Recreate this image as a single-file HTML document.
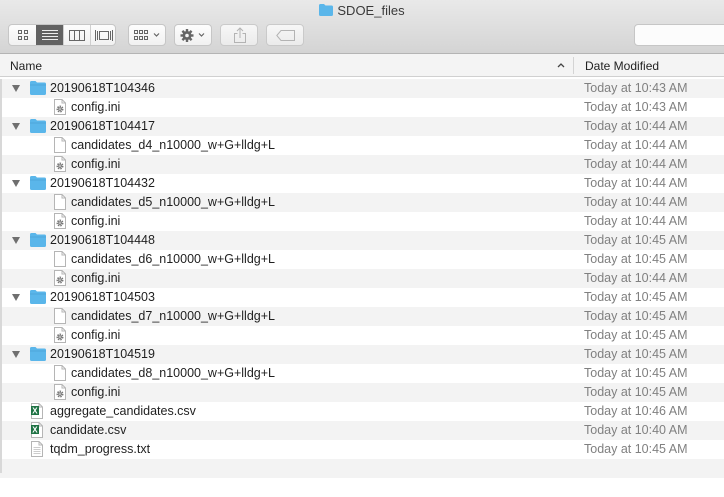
<!DOCTYPE html>
<html><head><meta charset="utf-8"><style>
*{margin:0;padding:0;box-sizing:border-box}
body{width:724px;height:473px;overflow:hidden;background:#fff;font-family:"Liberation Sans",sans-serif;position:relative}
.tb{position:absolute;left:0;top:0;width:724px;height:54px;background:linear-gradient(#e9e9e9,#d4d4d4);border-bottom:1px solid #b4b4b4}
.title{position:absolute;top:3px;left:0;width:724px;text-align:center;font-size:13px;color:#3a3a3a}
.btn{position:absolute;top:24px;height:22px;background:linear-gradient(#fdfdfd,#f1f1f1);border:1px solid #c6c6c6;border-radius:4px}
.hdr{position:absolute;top:54px;left:0;width:724px;height:23px;background:#f4f4f4;border-bottom:1px solid #d0d0d0;font-size:12px;color:#222}
.row{position:absolute;left:0;width:724px;height:19px;font-size:12.5px;color:#1f1f1f}
.g{background:#f3f3f3}
.row .n{position:absolute;top:2px;white-space:nowrap}
.row .d{position:absolute;left:584px;top:2px;color:#808080}
.tri{position:absolute;left:12px;top:6px;width:0;height:0;border-left:4.5px solid transparent;border-right:4.5px solid transparent;border-top:7px solid #6f6f6f}
.fold{position:absolute;left:30px;top:2px}
.fi{position:absolute;top:1px}
</style></head><body>
<div class="tb">
<div class="title"><svg width="14" height="12" style="vertical-align:-1px;margin-right:4px"><path d="M0 1.5Q0 0 1.5 0H5L6.5 1.5H12.5Q14 1.5 14 3V10.5Q14 12 12.5 12H1.5Q0 12 0 10.5Z" fill="#5ab6ea"/></svg>SDOE_files</div>
<div class="btn" style="left:8px;width:108px;overflow:hidden">
<div style="position:absolute;left:27px;top:-1px;width:27px;height:22px;background:#626262"></div>
<div style="position:absolute;left:54px;top:0;width:1px;height:20px;background:#cfcfcf"></div>
<div style="position:absolute;left:81px;top:0;width:1px;height:20px;background:#cfcfcf"></div>
<svg style="position:absolute;left:9px;top:5px" width="10" height="10"><g fill="none" stroke="#666" stroke-width="1"><rect x=".5" y=".5" width="3" height="3"/><rect x="6.5" y=".5" width="3" height="3"/><rect x=".5" y="6.5" width="3" height="3"/><rect x="6.5" y="6.5" width="3" height="3"/></g></svg>
<svg style="position:absolute;left:33px;top:5px" width="16" height="11"><g stroke="#eee" stroke-width="1"><line x1="0" y1=".5" x2="16" y2=".5"/><line x1="0" y1="3.5" x2="16" y2="3.5"/><line x1="0" y1="6.5" x2="16" y2="6.5"/><line x1="0" y1="9.5" x2="16" y2="9.5"/></g></svg>
<svg style="position:absolute;left:60px;top:5px" width="16" height="11"><g fill="none" stroke="#666"><rect x=".5" y=".5" width="15" height="10"/><line x1="5.5" y1="0" x2="5.5" y2="11"/><line x1="10.5" y1="0" x2="10.5" y2="11"/></g></svg>
<svg style="position:absolute;left:86px;top:5px" width="18" height="11"><g fill="none" stroke="#666"><rect x="4.5" y="1.5" width="9" height="8"/><line x1=".5" y1="0" x2=".5" y2="11"/><line x1="2.5" y1="1" x2="2.5" y2="10"/><line x1="15.5" y1="1" x2="15.5" y2="10"/><line x1="17.5" y1="0" x2="17.5" y2="11"/></g></svg>
</div>
<div class="btn" style="left:128px;width:38px"><svg style="position:absolute;left:5px;top:5px" width="30" height="11"><g fill="none" stroke="#666"><rect x=".5" y=".5" width="3" height="3"/><rect x="5.5" y=".5" width="3" height="3"/><rect x="10.5" y=".5" width="3" height="3"/><rect x=".5" y="6.5" width="3" height="3"/><rect x="5.5" y="6.5" width="3" height="3"/><rect x="10.5" y="6.5" width="3" height="3"/><path d="M20 3.5l2.5 2.5 2.5-2.5" stroke-width="1.2"/></g></svg></div>
<div class="btn" style="left:174px;width:38px"><svg style="position:absolute;left:5px;top:3px" width="30" height="15"><g fill="#666"><circle cx="7" cy="7.5" r="4.5"/><g stroke="#666" stroke-width="2.4"><line x1="7" y1="1" x2="7" y2="14"/><line x1=".5" y1="7.5" x2="13.5" y2="7.5"/><line x1="2.4" y1="2.9" x2="11.6" y2="12.1"/><line x1="11.6" y1="2.9" x2="2.4" y2="12.1"/></g><circle cx="7" cy="7.5" r="1.8" fill="#f6f6f6"/></g><path d="M19 5.5l2.5 2.5 2.5-2.5" fill="none" stroke="#666" stroke-width="1.2"/></svg></div>
<div class="btn" style="left:220px;width:38px;opacity:.8"><svg style="position:absolute;left:12px;top:2px" width="14" height="17"><g fill="none" stroke="#aaa"><path d="M4.5 6.5H1.5V15.5H12.5V6.5H9.5"/><path d="M7 11V1M4 4l3-3 3 3"/></g></svg></div>
<div class="btn" style="left:266px;width:38px;opacity:.8"><svg style="position:absolute;left:9px;top:5px" width="20" height="11"><path d="M5 .5H18.5V10.5H5L.8 5.5Z" fill="none" stroke="#aaa"/></svg></div>
<div class="btn" style="left:634px;width:100px;background:#fcfcfc"></div>
</div>
<div class="hdr"><span style="position:absolute;left:10px;top:5px">Name</span><svg style="position:absolute;left:557px;top:8px" width="8" height="6"><path d="M1 5l3-3 3 3" fill="none" stroke="#444" stroke-width="1.3"/></svg><div style="position:absolute;left:573px;top:3px;width:1px;height:17px;background:#d4d4d4"></div><span style="position:absolute;left:585px;top:5px">Date Modified</span></div>
<div id="rows"></div>
<div style="position:absolute;left:0;top:79px;width:2px;height:394px;background:#d8d8d8"></div>
<script>
const F='<svg class="fold" width="16" height="14"><path d="M0 1.5Q0 0 1.5 0H5.5L7 1.5H14.5Q16 1.5 16 3V12.5Q16 14 14.5 14H1.5Q0 14 0 12.5Z" fill="#5ab6ea"/><path d="M0 4H16" stroke="#4aa3d8" stroke-width=".8"/></svg>';
function doc(x,t){let s='<svg class="fi" style="left:'+x+'px" width="12" height="16"><path d="M.5 .5H8L11.5 4V15.5H.5Z" fill="#fff" stroke="#b5b5b5"/><path d="M8 .5V4H11.5" fill="none" stroke="#b5b5b5"/>';
if(t=='g')s+='<circle cx="6" cy="10" r="2.6" fill="none" stroke="#777" stroke-width="1.8" stroke-dasharray="1.4 .9"/><circle cx="6" cy="10" r="1.8" fill="#777"/><circle cx="6" cy="10" r=".8" fill="#fff"/>';
if(t=='x')s+='<rect x="0" y="3" width="8" height="9" fill="#1f7244"/><text x="1.3" y="10.5" font-size="8" font-weight="bold" fill="#fff" font-family="Liberation Sans">X</text>';
if(t=='t')s+='<g stroke="#ccc"><line x1="2.5" y1="6.5" x2="9.5" y2="6.5"/><line x1="2.5" y1="8.5" x2="9.5" y2="8.5"/><line x1="2.5" y1="10.5" x2="9.5" y2="10.5"/><line x1="2.5" y1="12.5" x2="9.5" y2="12.5"/></g>';
return s+'</svg>';}
const data=[["f","20190618T104346","10:43"],["g","config.ini","10:43"],
["f","20190618T104417","10:44"],["c","candidates_d4_n10000_w+G+lldg+L","10:44"],["g","config.ini","10:44"],
["f","20190618T104432","10:44"],["c","candidates_d5_n10000_w+G+lldg+L","10:44"],["g","config.ini","10:44"],
["f","20190618T104448","10:45"],["c","candidates_d6_n10000_w+G+lldg+L","10:45"],["g","config.ini","10:44"],
["f","20190618T104503","10:45"],["c","candidates_d7_n10000_w+G+lldg+L","10:45"],["g","config.ini","10:45"],
["f","20190618T104519","10:45"],["c","candidates_d8_n10000_w+G+lldg+L","10:45"],["g","config.ini","10:45"],
["x","aggregate_candidates.csv","10:46"],["x","candidate.csv","10:40"],["t","tqdm_progress.txt","10:45"]];
let h='';
for(let i=0;i<22;i++){const y=79+i*19;const d=data[i];let c='<div class="row'+(i%2==0?' g':'')+'" style="top:'+y+'px">';
if(d){const[t,n,tm]=d;
if(t=='f')c+='<div class="tri"></div>'+F+'<span class="n" style="left:50px">'+n+'</span>';
else if(t=='g'||t=='c')c+=doc(54,t=='g'?'g':'')+'<span class="n" style="left:71px">'+n+'</span>';
else c+=doc(31,t)+'<span class="n" style="left:50px">'+n+'</span>';
c+='<span class="d">Today at '+tm+' AM</span>';}
h+=c+'</div>';}
document.getElementById('rows').innerHTML=h;
</script>
</body></html>
